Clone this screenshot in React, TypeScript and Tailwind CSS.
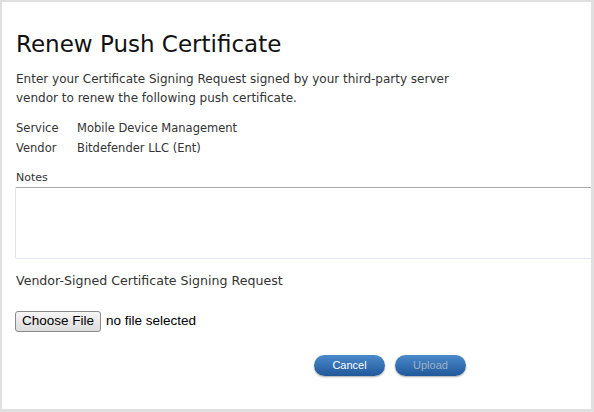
import React from "react";

export default function App() {
  return (
    <div className="w-[594px] h-[412px] bg-[#e0e0e0] p-[2px] pr-[3px] pb-[3px] overflow-hidden">
      <div className="w-full h-full bg-white overflow-hidden text-[#333] font-['DejaVu_Sans',sans-serif]">
        <div className="pl-[13px] pt-[27px]">
          <h1 className="text-[23px] leading-[30px] text-[#111] pl-[1px]">Renew Push Certificate</h1>
          <p className="mt-[11px] text-[12px] leading-[19px] pl-[1px] w-[465px]">
            Enter your Certificate Signing Request signed by your third-party server vendor to renew the following push certificate.
          </p>
          <div className="mt-[10px] text-[11.5px] leading-[20px] pl-[1px]">
            <div className="flex">
              <span className="w-[61px]">Service</span>
              <span>Mobile Device Management</span>
            </div>
            <div className="flex">
              <span className="w-[61px]">Vendor</span>
              <span>Bitdefender LLC (Ent)</span>
            </div>
          </div>
          <div className="mt-[12px] text-[11px] leading-[16px] pl-[1px]">Notes</div>
          <div className="mt-[1px] h-[72px] w-[600px] border border-[#e4e4e4] border-t-[#a8a8a8] border-b-[#dde6ee] rounded-[2px]" />
          <div className="mt-[14px] text-[12.6px] leading-[16px] pl-[1px]">Vendor-Signed Certificate Signing Request</div>
          <div className="mt-[22px] flex items-center font-['Liberation_Sans',sans-serif]">
            <div className="h-[21px] px-[6px] flex items-center border border-[#8a8a8a] rounded-[3px] bg-gradient-to-b from-[#f6f6f6] to-[#dcdcdc] text-[13.5px] text-black">Choose File</div>
            <span className="ml-[5px] text-[13.5px] text-black">no file selected</span>
          </div>
          <div className="mt-[23px] flex gap-[10px] pl-[299px] font-['Liberation_Sans',sans-serif]">
            <div className="w-[71px] h-[21px] rounded-full bg-gradient-to-b from-[#4a8acb] to-[#21589a] shadow-[0_1px_2px_rgba(0,0,0,0.35)] flex items-center justify-center text-[11px] text-white">Cancel</div>
            <div className="w-[71px] h-[21px] rounded-full bg-gradient-to-b from-[#4a8acb] to-[#21589a] shadow-[0_1px_2px_rgba(0,0,0,0.35)] flex items-center justify-center text-[11px] text-[#9fb3c8]">Upload</div>
          </div>
        </div>
      </div>
    </div>
  );
}
